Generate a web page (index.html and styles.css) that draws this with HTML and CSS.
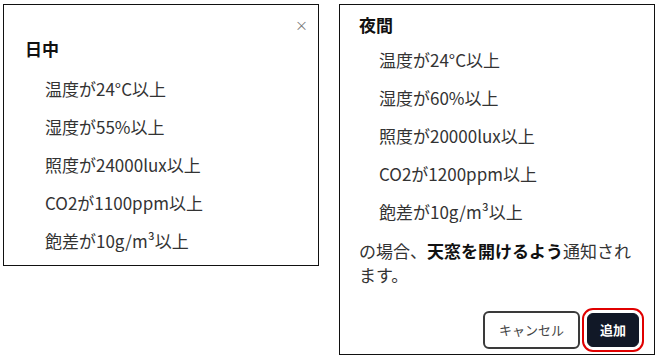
FILE: index.html
```html
<!DOCTYPE html>
<html lang="ja">
<head>
  <meta charset="UTF-8">
  <meta name="viewport" content="width=device-width, initial-scale=1.0">
  <title>通知条件</title>
  <link rel="stylesheet" href="styles.css">
</head>
<body>
  <div class="board">
    <div class="panel panel-day">
      <div class="close-row"><span class="close-btn">×</span></div>
      <h2 class="panel-title">日中</h2>
      <ul class="cond-list">
        <li>温度が24°C以上</li>
        <li>湿度が55%以上</li>
        <li>照度が24000lux以上</li>
        <li>CO2が1100ppm以上</li>
        <li>飽差が10g/m³以上</li>
      </ul>
    </div>

    <div class="panel panel-night">
      <h2 class="panel-title">夜間</h2>
      <ul class="cond-list">
        <li>温度が24°C以上</li>
        <li>湿度が60%以上</li>
        <li>照度が20000lux以上</li>
        <li>CO2が1200ppm以上</li>
        <li>飽差が10g/m³以上</li>
      </ul>
      <p class="notice">の場合、<strong>天窓を開けるよう</strong>通知されます。</p>
      <div class="actions">
        <button class="cancel-btn">キャンセル</button>
        <button class="add-btn">追加</button>
      </div>
    </div>
  </div>
</body>
</html>
```

FILE: styles.css
```css
body { margin: 0; background-color: #fff; color: #333; font-family: "Noto Sans CJK JP", "Noto Sans", sans-serif; }
.board { display: flex; align-items: flex-start; gap: 20px; padding: 4px 0 0 3px; }
.panel { box-sizing: border-box; width: 316px; border: 1px solid #111; background-color: #fff; }
.panel-day { height: 262px; padding: 10px 10px 0 21px; }
.panel-night { height: 351px; padding: 7px 15px 0 19px; }
.close-row { height: 16px; line-height: 16px; text-align: right; margin-bottom: 5px; }
.close-btn { font-size: 13px; color: #777; }
.panel-title { margin: 0; font-size: 17px; line-height: 25px; font-weight: bold; color: #111; }
.cond-list { list-style: none; margin: 0; padding: 0 0 0 20px; display: flex; flex-direction: column; gap: 13px; font-size: 17px; line-height: 25px; }
.panel-day .cond-list { margin-top: 15px; }
.panel-night .cond-list { margin-top: 10px; }
.notice { margin: 15px 0 0; font-size: 17px; line-height: 24px; }
.notice strong { color: #111; }
.actions { display: flex; justify-content: flex-end; align-items: center; gap: 7px; margin-top: 24px; }
.actions button { font-family: inherit; font-size: 13px; line-height: 18px; border-radius: 6px; cursor: pointer; }
.cancel-btn { padding: 8px 14px; background-color: #fff; color: #444; border: 2px solid #3a3a3a; }
.add-btn { padding: 7px 12px; background-color: #111827; color: #fff; font-weight: bold; border: 1px solid #111827; border-radius: 5px; outline: 2px solid #e00000; outline-offset: 3px; }
```
